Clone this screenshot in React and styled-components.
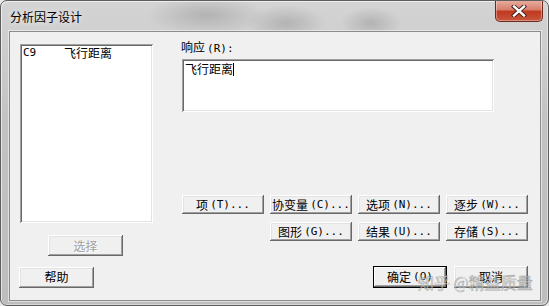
import React from "react";
import styled, { createGlobalStyle, css } from "styled-components";

const Global = createGlobalStyle`
  html, body { margin: 0; padding: 0; background: #e8e8e8; }
  body { font-family: "Noto Sans CJK SC", "Liberation Sans", sans-serif; font-size: 12px; }
  * { box-sizing: border-box; }
`;

const Window = styled.div`
  width: 549px;
  height: 306px;
  border: 1px solid #5e5e5e;
  border-radius: 7px;
  background:
    radial-gradient(ellipse 60px 20px at 205px 14px, rgba(120,120,120,0.35), transparent),
    radial-gradient(ellipse 40px 18px at 285px 22px, rgba(110,110,110,0.3), transparent),
    radial-gradient(ellipse 30px 16px at 370px 22px, rgba(110,110,110,0.3), transparent),
    linear-gradient(to bottom, #d4d4d4 0%, #c2c2c2 40%, #bdbdbd 100%);
  box-shadow: inset 1px 1px 0 rgba(255,255,255,0.6), inset -1px -1px 0 rgba(255,255,255,0.4);
  display: flex;
  flex-direction: column;
  position: relative;
  overflow: hidden;
`;

const TitleBar = styled.div`
  height: 30px;
  display: flex;
  align-items: flex-start;
  justify-content: space-between;
  padding-left: 9px;
`;

const Title = styled.div`
  margin-top: 9px;
  font-size: 12px;
  line-height: 14px;
  color: #000;
  text-shadow: 0 0 6px rgba(255,255,255,0.9);
`;

const CloseButton = styled.div`
  width: 48px;
  height: 22px;
  margin-top: -1px;
  margin-right: 5px;
  border: 1px solid #6b2a20;
  border-top: none;
  border-radius: 0 0 5px 5px;
  background: linear-gradient(to bottom, #e9b0a2 0%, #d6806c 45%, #c0391f 55%, #c8563c 100%);
  box-shadow: inset 0 0 0 1px rgba(255,255,255,0.35);
  display: flex;
  align-items: center;
  justify-content: center;
`;

const Client = styled.div`
  margin: 0 7px 0 8px;
  height: 270px;
  border: 1px solid #8c8c8c;
  background: #f0f0f0;
  display: flex;
  flex-direction: column;
  box-shadow: 0 0 0 1px rgba(255,255,255,0.5);
`;

const TopSection = styled.div`
  display: flex;
  padding: 8px 0 0 10px;
`;

const LeftColumn = styled.div`
  display: flex;
  flex-direction: column;
  margin-top: 4px;
`;

const sunken = css`
  background: #fff;
  box-shadow: inset 1px 1px 0 #a0a0a0, inset -1px -1px 0 #ffffff,
    inset 2px 2px 0 #696969, inset -2px -2px 0 #e3e3e3;
`;

const ListBox = styled.div`
  ${sunken}
  width: 133px;
  height: 179px;
  padding: 2px 3px;
`;

const ListRow = styled.div`
  display: flex;
  line-height: 14px;
  font-size: 12px;
`;

const ColName = styled.span`
  width: 41px;
  font-family: "DejaVu Sans Mono", "Liberation Mono", monospace;
  font-size: 11px;
`;

const Key = styled.span`
  font-family: "DejaVu Sans Mono", "Liberation Mono", monospace;
  font-size: 11px;
  margin-left: 2px;
`;

const RightColumn = styled.div`
  display: flex;
  flex-direction: column;
  margin-left: 28px;
`;

const Label = styled.div`
  line-height: 14px;
  height: 14px;
`;

const TextBox = styled.div`
  ${sunken}
  width: 312px;
  height: 53px;
  margin: 5px 0 0 1px;
  padding: 3px 3px;
  line-height: 14px;
  display: flex;
  align-items: flex-start;
`;

const Caret = styled.span`
  display: inline-block;
  width: 1px;
  height: 13px;
  background: #000;
  margin-top: 1px;
`;

const ButtonGrid = styled.div`
  display: grid;
  grid-template-columns: repeat(4, 82px);
  column-gap: 6px;
  row-gap: 8px;
  margin: 83px 0 0 1px;
`;

const Button = styled.div`
  width: ${(p) => p.$w || 82}px;
  height: ${(p) => p.$h || 19}px;
  grid-column: ${(p) => p.$col || "auto"};
  margin-left: ${(p) => p.$ml || 0}px;
  display: flex;
  align-items: center;
  justify-content: center;
  font-size: 12px;
  line-height: 14px;
  color: ${(p) => (p.$disabled ? "#a0a0a0" : "#000")};
  text-shadow: ${(p) => (p.$disabled ? "1px 1px 0 #fff" : "none")};
  background: #f0f0f0;
  box-shadow: ${(p) =>
    p.$default
      ? "inset 0 0 0 1px #000, inset -2px -2px 0 #696969, inset 2px 2px 0 #fff, inset -3px -3px 0 #a0a0a0"
      : "inset -1px -1px 0 #696969, inset 1px 1px 0 #fff, inset -2px -2px 0 #a0a0a0, inset 2px 2px 0 #e3e3e3"};
  white-space: pre;
`;

const BottomRow = styled.div`
  display: flex;
  align-items: center;
  margin-top: 10px;
  padding: 0 12px 0 9px;
`;

const Spacer = styled.div`
  flex: 1;
`;

const Gap = styled.div`
  width: 7px;
`;

const Watermark = styled.div`
  position: absolute;
  left: 417px;
  top: 271px;
  font-size: 16px;
  line-height: 20px;
  color: rgba(255, 255, 255, 0.6);
  -webkit-text-stroke: 0.6px rgba(110, 110, 110, 0.6);
  white-space: pre;
  pointer-events: none;
`;

const Btn = ({ label, keyText, ...rest }) => (
  <Button {...rest}>
    {label}
    {keyText && <Key>{keyText}</Key>}
  </Button>
);

export default function App() {
  return (
    <>
      <Global />
      <Window>
        <TitleBar>
          <Title>分析因子设计</Title>
          <CloseButton>
            <svg width="16" height="12" viewBox="0 0 16 12">
              <path d="M3 1.5 L13 10.5 M13 1.5 L3 10.5" stroke="#3a1a14" strokeWidth="4.2" strokeLinecap="square" />
              <path d="M3 1.5 L13 10.5 M13 1.5 L3 10.5" stroke="#ffffff" strokeWidth="2.4" strokeLinecap="square" />
            </svg>
          </CloseButton>
        </TitleBar>
        <Client>
          <TopSection>
            <LeftColumn>
              <ListBox>
                <ListRow>
                  <ColName>C9</ColName>
                  <span>飞行距离</span>
                </ListRow>
              </ListBox>
              <Button $w={75} $h={21} $ml={28} $disabled style={{ marginTop: 12 }}>
                选择
              </Button>
            </LeftColumn>
            <RightColumn>
              <Label>
                响应<Key>(R):</Key>
              </Label>
              <TextBox>
                <span>飞行距离</span>
                <Caret />
              </TextBox>
              <ButtonGrid>
                <Btn label="项" keyText="(T)..." />
                <Btn label="协变量" keyText="(C)..." />
                <Btn label="选项" keyText="(N)..." />
                <Btn label="逐步" keyText="(W)..." />
                <Btn $col={2} label="图形" keyText="(G)..." />
                <Btn label="结果" keyText="(U)..." />
                <Btn label="存储" keyText="(S)..." />
              </ButtonGrid>
            </RightColumn>
          </TopSection>
          <BottomRow>
            <Button $w={75} $h={21}>帮助</Button>
            <Spacer />
            <Btn $w={74} $h={22} $default label="确定" keyText="(O)" />
            <Gap />
            <Button $w={74} $h={22}>取消</Button>
          </BottomRow>
        </Client>
        <Watermark>知乎 @精益质量</Watermark>
      </Window>
    </>
  );
}
